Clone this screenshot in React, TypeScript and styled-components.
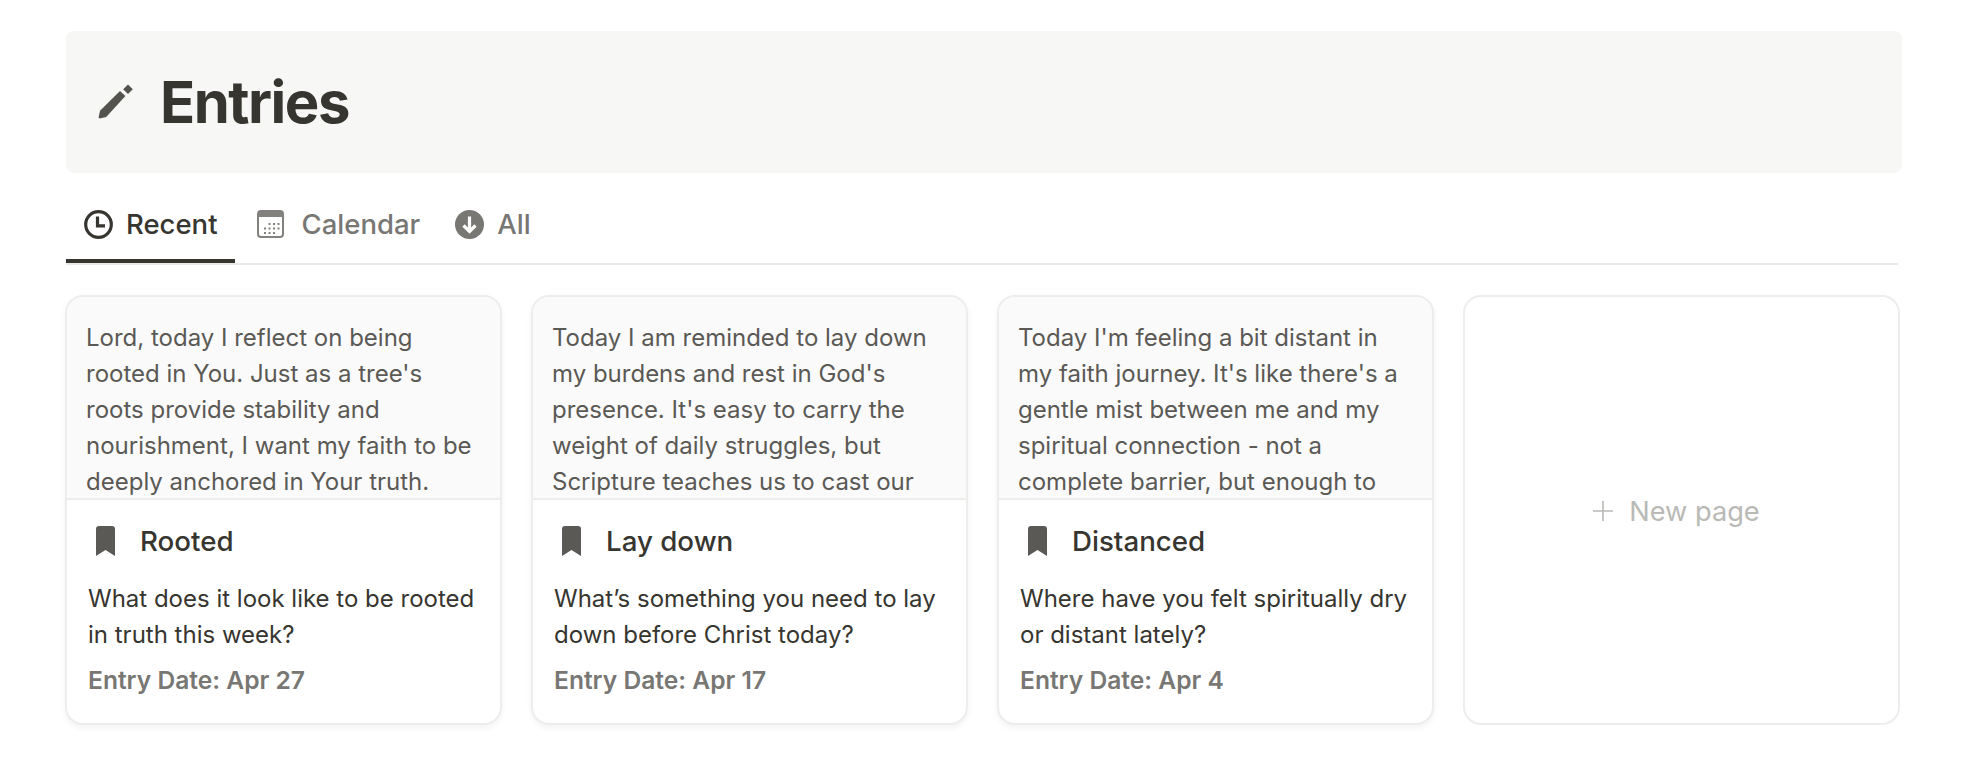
import styled, { createGlobalStyle } from "styled-components";

const GlobalStyle = createGlobalStyle`
  html, body {
    margin: 0;
    padding: 0;
    background: #ffffff;
    font-family: Inter, "Liberation Sans", sans-serif;
    color: #37352f;
  }
`;

const Page = styled.main`
  width: 1974px;
  height: 758px;
  box-sizing: border-box;
  padding: 31px 72px 0 65px;
  overflow: hidden;
`;

const Banner = styled.header`
  display: flex;
  align-items: center;
  gap: 27px;
  height: 142px;
  margin-left: 1px;
  padding-left: 31px;
  background: #f7f7f5;
  border-radius: 8px;
`;

const BannerTitle = styled.h1`
  margin: 0;
  font-size: 58px;
  line-height: 70px;
  font-weight: 700;
  letter-spacing: -1.5px;
  color: #37352f;
`;

const TabBar = styled.nav`
  display: flex;
  height: 92px;
  margin: 0 4px 0 1px;
  box-sizing: border-box;
  border-bottom: 2px solid #e9e9e7;
`;

const Tab = styled.div<{ $active?: boolean }>`
  display: flex;
  align-items: center;
  gap: 13px;
  height: 90px;
  padding: 16px 17px 0 18px;
  box-sizing: border-box;
  font-size: 27.5px;
  font-weight: 500;
  color: ${(p) => (p.$active ? "#37352f" : "#787774")};
  border-bottom: 4px solid ${(p) => (p.$active ? "#37352f" : "transparent")};
`;

const CardGrid = styled.section`
  display: grid;
  grid-template-columns: repeat(4, 437px);
  gap: 29px;
  margin-top: 30px;
`;

const Card = styled.article`
  display: flex;
  flex-direction: column;
  height: 430px;
  box-sizing: border-box;
  background: #ffffff;
  border: 2px solid #ededec;
  border-radius: 18px;
  box-shadow: 0 3px 6px rgba(15, 15, 15, 0.05);
  overflow: hidden;
`;

const Preview = styled.div`
  height: 203px;
  flex: none;
  box-sizing: border-box;
  padding: 23px 22px 0 19px;
  background: #fafafa;
  border-bottom: 2px solid #ededec;
  overflow: hidden;
  font-size: 24px;
  line-height: 36px;
  color: #5a5955;
`;

const CardBody = styled.div`
  padding: 23px 12px 0 21px;
`;

const TitleRow = styled.div`
  display: flex;
  align-items: center;
  gap: 25px;
  height: 36px;
  padding-left: 8px;
  font-size: 27.7px;
  font-weight: 500;
  color: #37352f;
`;

const Question = styled.p`
  margin: 22px 0 0;
  font-size: 24px;
  line-height: 36px;
  color: #37352f;
`;

const EntryDate = styled.div`
  margin-top: 9px;
  font-size: 24.6px;
  line-height: 36px;
  font-weight: 600;
  color: #787774;
`;

const NewPageCard = styled.article`
  display: flex;
  align-items: center;
  justify-content: center;
  gap: 16px;
  height: 430px;
  box-sizing: border-box;
  padding: 2px 10px 0 0;
  border: 2px solid #ededec;
  border-radius: 18px;
  font-size: 27.2px;
  color: #b9b9b6;
`;

function PencilIcon() {
  return (
    <svg width="36" height="36" viewBox="0 1.5 36 36" fill="#55534e">
      <path d="M23 8.4 L28.4 13.4 L9.2 34.4 L2.6 36 L1.6 35 L3 28.2 Z" />
      <path d="M31 2 L35.8 6.8 L31 11.6 L26.2 6.8 Z" />
    </svg>
  );
}

function ClockIcon() {
  return (
    <svg width="29" height="29" viewBox="0 0 29 29" fill="none" stroke="#37352f" strokeWidth="3.2">
      <circle cx="14.5" cy="14.5" r="12.8" />
      <path d="M13.5 6.5 V15.8 H21" />
    </svg>
  );
}

// viewBox carries the empty space this glyph has on both sides in the tab
function CalendarIcon() {
  const dots: [number, number][] = [];
  [13, 17.5, 22].forEach((y, row) => {
    [6, 10.5, 15, 19.5].forEach((x, col) => {
      if ((row === 0 && col === 0) || (row === 2 && col === 3)) return;
      dots.push([x + 1, y]);
    });
  });
  return (
    <svg width="36" height="28" viewBox="-4 0 36 28" fill="#82817d">
      <rect x="1" y="1" width="25" height="26" rx="3" fill="none" stroke="#82817d" strokeWidth="2" />
      <path d="M1 4 a3 3 0 0 1 3 -3 h19 a3 3 0 0 1 3 3 v3 h-25 Z" />
      {dots.map(([x, y]) => (
        <rect key={`${x}-${y}`} x={x} y={y} width="2" height="2" />
      ))}
    </svg>
  );
}

function ArrowCircleIcon() {
  return (
    <svg width="29" height="29" viewBox="0 0 29 29">
      <circle cx="14.5" cy="14.5" r="14.5" fill="#787774" />
      <path d="M14.5 6.5 V21 M8.5 15.5 L14.5 21.5 L20.5 15.5" fill="none" stroke="#ffffff" strokeWidth="3.2" />
    </svg>
  );
}

function BookmarkIcon() {
  return (
    <svg width="19" height="30" viewBox="0 0 19 30" fill="#5a5955">
      <path d="M0 3 a3 3 0 0 1 3 -3 h13 a3 3 0 0 1 3 3 v27 l-9.5 -6 l-9.5 6 Z" />
    </svg>
  );
}

function PlusIcon() {
  return (
    <svg width="20" height="20" viewBox="0 0 20 20" stroke="#b9b9b6" strokeWidth="1.6">
      <path d="M10 0 V20 M0 10 H20" />
    </svg>
  );
}

const entries = [
  {
    title: "Rooted",
    preview:
      "Lord, today I reflect on being rooted in You. Just as a tree's roots provide stability and nourishment, I want my faith to be deeply anchored in Your truth.",
    question: "What does it look like to be rooted in truth this week?",
    date: "Apr 27",
  },
  {
    title: "Lay down",
    preview:
      "Today I am reminded to lay down my burdens and rest in God's presence. It's easy to carry the weight of daily struggles, but Scripture teaches us to cast our",
    question: "What’s something you need to lay down before Christ today?",
    date: "Apr 17",
  },
  {
    title: "Distanced",
    preview:
      "Today I'm feeling a bit distant in my faith journey. It's like there's a gentle mist between me and my spiritual connection - not a complete barrier, but enough to",
    question: "Where have you felt spiritually dry or distant lately?",
    date: "Apr 4",
  },
];

export default function App() {
  return (
    <>
      <GlobalStyle />
      <Page>
        <Banner>
          <PencilIcon />
          <BannerTitle>Entries</BannerTitle>
        </Banner>
        <TabBar>
          <Tab $active>
            <ClockIcon />
            Recent
          </Tab>
          <Tab>
            <CalendarIcon />
            Calendar
          </Tab>
          <Tab>
            <ArrowCircleIcon />
            All
          </Tab>
        </TabBar>
        <CardGrid>
          {entries.map((entry) => (
            <Card key={entry.title}>
              <Preview>{entry.preview}</Preview>
              <CardBody>
                <TitleRow>
                  <BookmarkIcon />
                  {entry.title}
                </TitleRow>
                <Question>{entry.question}</Question>
                <EntryDate>Entry Date: {entry.date}</EntryDate>
              </CardBody>
            </Card>
          ))}
          <NewPageCard>
            <PlusIcon />
            New page
          </NewPageCard>
        </CardGrid>
      </Page>
    </>
  );
}
